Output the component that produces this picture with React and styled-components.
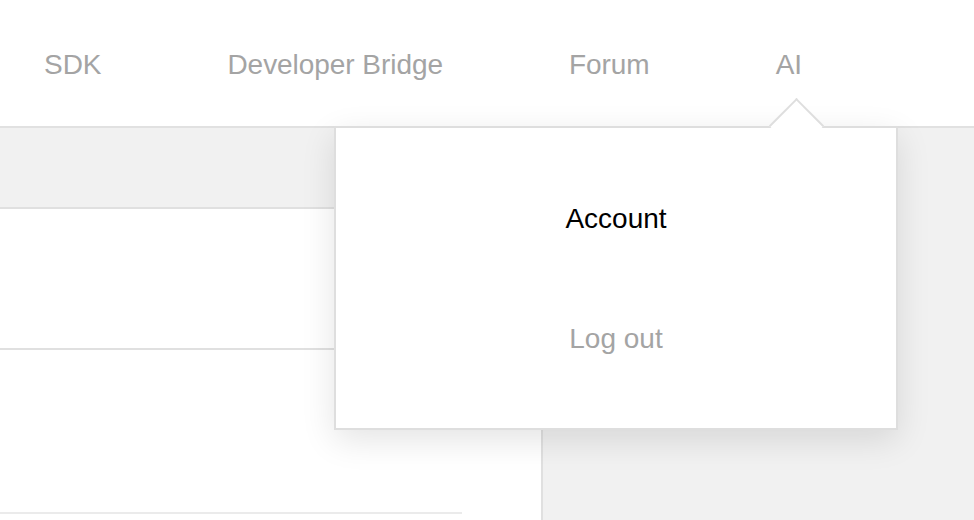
import React from "react";
import styled, { createGlobalStyle } from "styled-components";

const Global = createGlobalStyle`
  html, body { margin: 0; padding: 0; }
  body {
    background: #f1f1f1;
    font-family: "Liberation Sans", Arial, sans-serif;
    overflow: hidden;
  }
`;

const Page = styled.div`
  position: relative;
  width: 974px;
  height: 520px;
  overflow: hidden;
`;

const Header = styled.header`
  height: 126px;
  background: #ffffff;
  border-bottom: 2px solid #e1e1e1;
  display: flex;
  align-items: center;
`;

const Nav = styled.nav`
  display: flex;
  align-items: center;
  gap: 126px;
  padding-left: 44px;
  padding-top: 3px;
`;

const NavItem = styled.a`
  font-size: 28px;
  letter-spacing: -0.05px;
  color: #a4a4a4;
  text-decoration: none;
  white-space: nowrap;
`;

const Main = styled.main`
  padding-top: 79px;
`;

const Card = styled.section`
  width: 541px;
  height: 320px;
  background: #ffffff;
  border-top: 2px solid #e0e0e0;
  border-right: 2px solid #e0e0e0;
  display: flex;
  flex-direction: column;
`;

const Row = styled.div`
  height: ${(p) => p.$h}px;
  flex: none;
  border-bottom: ${(p) => (p.$divider ? "2px solid #e0e0e0" : "none")};
  display: flex;
  flex-direction: column;
`;

const Underline = styled.div`
  margin-top: 162px;
  width: 462px;
  height: 2px;
  background: #ebebeb;
`;

const Dropdown = styled.div`
  position: absolute;
  left: 334px;
  top: 126px;
  width: 564px;
  height: 304px;
  box-sizing: border-box;
  background: #ffffff;
  border: 2px solid #dedede;
  box-shadow: 0 10px 32px rgba(0, 0, 0, 0.11);
  padding: 31px 0 29px;
  display: flex;
  flex-direction: column;

  &::before {
    content: "";
    position: absolute;
    width: 39px;
    height: 39px;
    box-sizing: border-box;
    left: 441px;
    top: -22px;
    background: #ffffff;
    border-left: 2px solid #dedede;
    border-top: 2px solid #dedede;
    transform: rotate(45deg);
  }
`;

const MenuItem = styled.a`
  height: 120px;
  display: flex;
  align-items: center;
  justify-content: center;
  font-size: 28px;
  color: ${(p) => (p.$active ? "#000000" : "#a4a4a4")};
  text-decoration: none;
  position: relative;
`;

export default function App() {
  return (
    <Page>
      <Global />
      <Header>
        <Nav>
          <NavItem>SDK</NavItem>
          <NavItem>Developer Bridge</NavItem>
          <NavItem>Forum</NavItem>
          <NavItem>AI</NavItem>
        </Nav>
      </Header>
      <Main>
        <Card>
          <Row $h={139} $divider />
          <Row $h={200}>
            <Underline />
          </Row>
        </Card>
      </Main>
      <Dropdown>
        <MenuItem $active>Account</MenuItem>
        <MenuItem>Log out</MenuItem>
      </Dropdown>
    </Page>
  );
}
